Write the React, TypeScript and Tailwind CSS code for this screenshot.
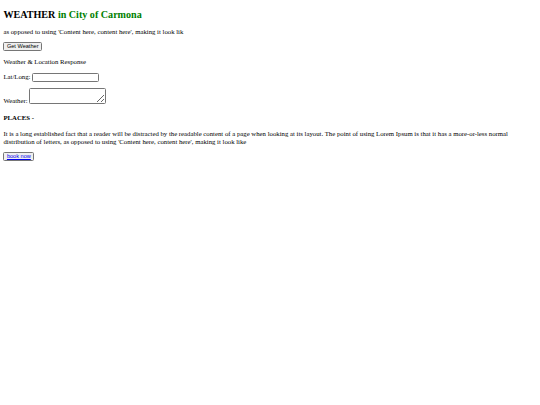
export default function App() {
  return (
    <div
      className="min-h-screen bg-white px-[3.4px] pt-px text-[6.75px] leading-[1.15] text-black"
      style={{ fontFamily: '"Liberation Serif", "Times New Roman", serif' }}
    >
      <h2 className="mt-[7.5px] mb-[8.4px] text-[10.1px] font-bold leading-[1.1]">
        WEATHER <span className="text-[#008000]">in City of Carmona</span>
      </h2>
      <p className="my-[6.75px]">as opposed to using 'Content here, content here', making it look lik</p>
      <div className="flex">
        <button className="h-[9px] rounded-[1.5px] border-[0.5px] border-[#767676] bg-[#efefef] px-[2.5px] font-['Liberation_Sans',Arial,sans-serif] text-[5.6px] leading-none text-black">
          Get Weather
        </button>
      </div>
      <p className="my-[6.75px]">Weather &amp; Location Response</p>
      <div className="my-[6.75px] flex items-end gap-[1.5px]">
        <span className="pb-[1px]">Lat/Long:</span>
        <input className="h-[9px] w-[67px] rounded-[1.5px] border-[0.5px] border-[#767676] bg-white" />
      </div>
      <div className="my-[6.75px] flex items-end gap-[1.5px]">
        <span>Weather:</span>
        <textarea className="h-[16px] w-[77px] rounded-[1.5px] border-[0.5px] border-[#767676] bg-white" />
      </div>
      <h4 className="mt-[9.5px] mb-[8.5px] font-bold">PLACES -</h4>
      <p className="my-[6.75px]">
        It is a long established fact that a reader will be distracted by the readable content of a page when looking at its layout. The point of using Lorem Ipsum is that it has a more-or-less normal distribution of letters, as opposed to using 'Content here, content here', making it look like
      </p>
      <div className="flex">
        <button className="h-[9px] rounded-[1.5px] border-[0.5px] border-[#767676] bg-[#efefef] px-[2.5px] font-['Liberation_Sans',Arial,sans-serif] text-[5.6px] leading-none">
          <a href="#" className="text-[#0000ee] underline">book now</a>
        </button>
      </div>
    </div>
  )
}
